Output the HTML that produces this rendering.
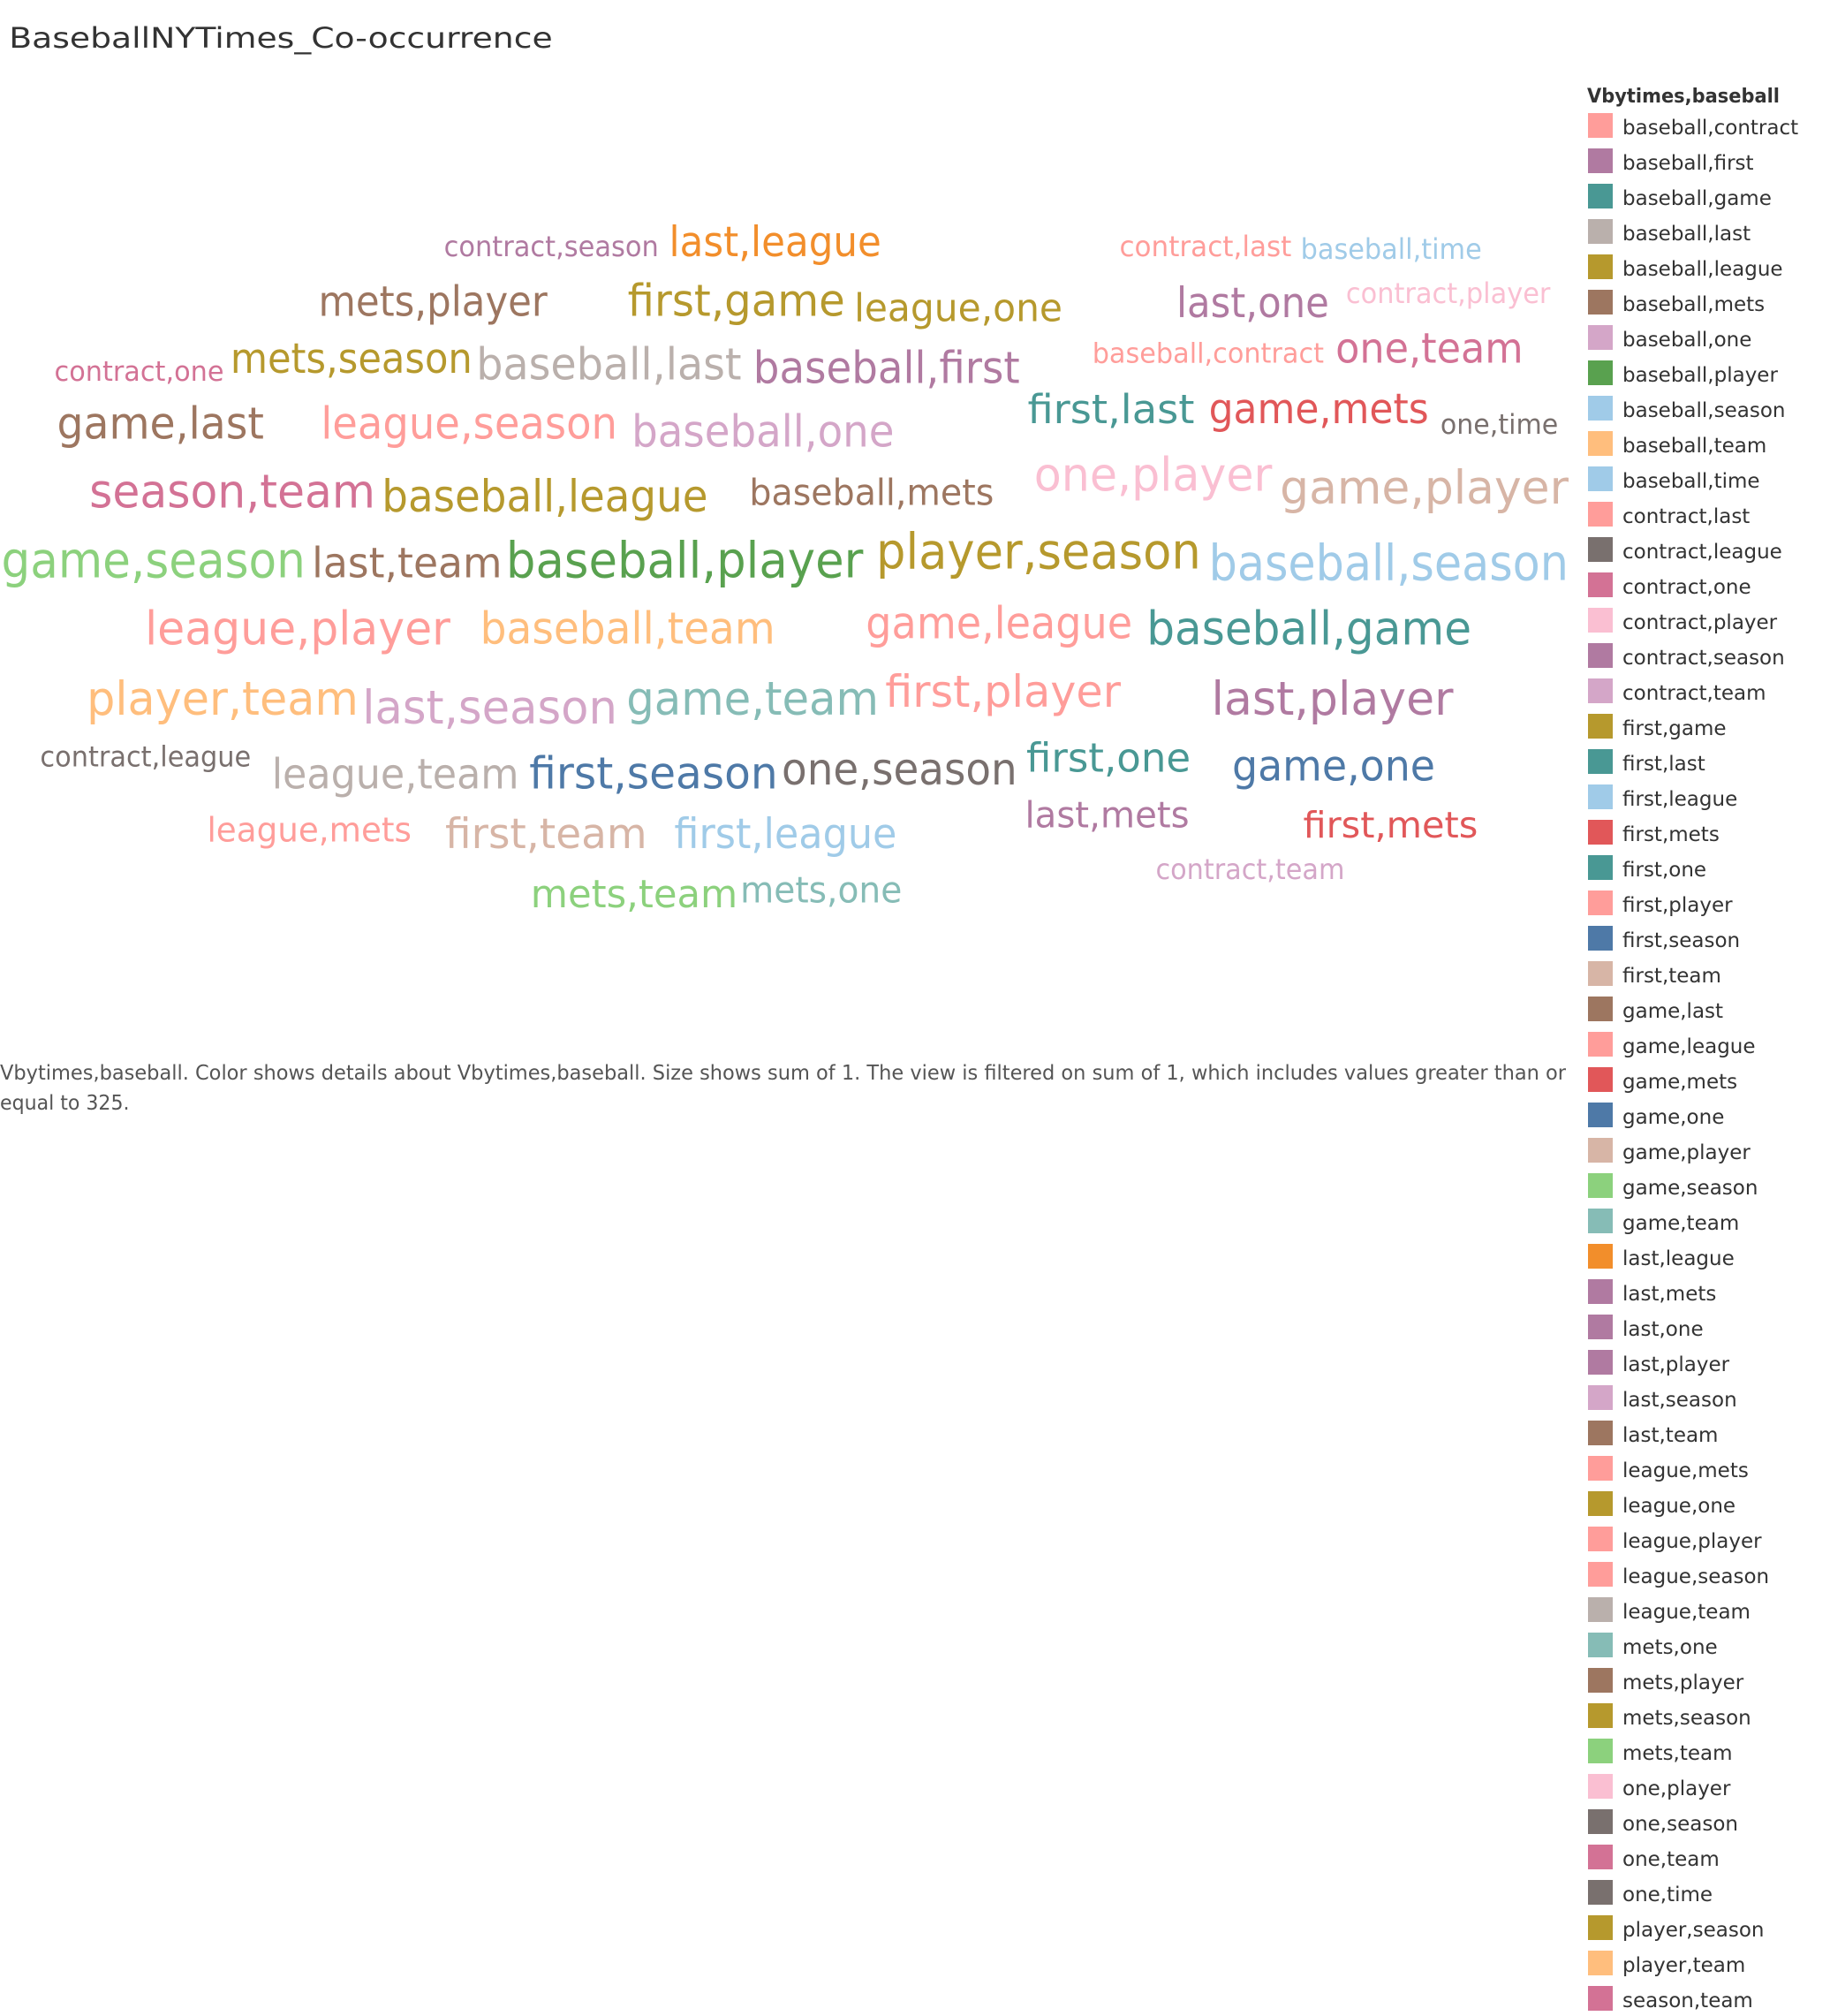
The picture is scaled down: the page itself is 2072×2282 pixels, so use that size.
<!DOCTYPE html>
<html><head><meta charset="utf-8"><style>
html,body{margin:0;padding:0;background:#fff;width:2072px;height:2282px;overflow:hidden}
svg{display:block}
text{font-family:"DejaVu Sans","Liberation Sans",sans-serif}
</style></head><body>
<svg width="2072" height="2282" viewBox="0 0 2072 2282" xmlns="http://www.w3.org/2000/svg">
<g transform="scale(1.4653)">
<text x="7" y="37" font-size="22" fill="#333" textLength="420" lengthAdjust="spacingAndGlyphs">BaseballNYTimes_Co-occurrence</text>
<g transform="translate(-1,-1)">
<text x="344" y="199" font-size="22" fill="#b07aa1" textLength="166" lengthAdjust="spacingAndGlyphs">contract,season</text>
<text x="518" y="199" font-size="32" fill="#f28e2b" textLength="164" lengthAdjust="spacingAndGlyphs">last,league</text>
<text x="866" y="199" font-size="22" fill="#ff9d9a" textLength="133" lengthAdjust="spacingAndGlyphs">contract,last</text>
<text x="1006" y="201" font-size="22" fill="#a0cbe8" textLength="140" lengthAdjust="spacingAndGlyphs">baseball,time</text>
<text x="247" y="245" font-size="32" fill="#9d7660" textLength="177" lengthAdjust="spacingAndGlyphs">mets,player</text>
<text x="486" y="245" font-size="34" fill="#b6992d" textLength="168" lengthAdjust="spacingAndGlyphs">first,game</text>
<text x="661" y="249" font-size="30" fill="#b6992d" textLength="161" lengthAdjust="spacingAndGlyphs">league,one</text>
<text x="910" y="246" font-size="32" fill="#b07aa1" textLength="118" lengthAdjust="spacingAndGlyphs">last,one</text>
<text x="1041" y="235" font-size="22" fill="#fabfd2" textLength="158" lengthAdjust="spacingAndGlyphs">contract,player</text>
<text x="43" y="295" font-size="21" fill="#d37295" textLength="131" lengthAdjust="spacingAndGlyphs">contract,one</text>
<text x="179" y="289" font-size="32" fill="#b6992d" textLength="187" lengthAdjust="spacingAndGlyphs">mets,season</text>
<text x="369" y="294" font-size="34" fill="#bab0ac" textLength="205" lengthAdjust="spacingAndGlyphs">baseball,last</text>
<text x="583" y="297" font-size="34" fill="#b07aa1" textLength="206" lengthAdjust="spacingAndGlyphs">baseball,first</text>
<text x="845" y="281" font-size="21" fill="#ff9d9a" textLength="179" lengthAdjust="spacingAndGlyphs">baseball,contract</text>
<text x="1033" y="281" font-size="32" fill="#d37295" textLength="145" lengthAdjust="spacingAndGlyphs">one,team</text>
<text x="45" y="340" font-size="34" fill="#9d7660" textLength="160" lengthAdjust="spacingAndGlyphs">game,last</text>
<text x="249" y="340" font-size="34" fill="#ff9d9a" textLength="229" lengthAdjust="spacingAndGlyphs">league,season</text>
<text x="489" y="346" font-size="34" fill="#d4a6c8" textLength="203" lengthAdjust="spacingAndGlyphs">baseball,one</text>
<text x="795" y="328" font-size="31" fill="#499894" textLength="129" lengthAdjust="spacingAndGlyphs">first,last</text>
<text x="935" y="328" font-size="32" fill="#e15759" textLength="170" lengthAdjust="spacingAndGlyphs">game,mets</text>
<text x="1114" y="336" font-size="21" fill="#79706e" textLength="91" lengthAdjust="spacingAndGlyphs">one,time</text>
<text x="70" y="393" font-size="36" fill="#d37295" textLength="221" lengthAdjust="spacingAndGlyphs">season,team</text>
<text x="296" y="396" font-size="34" fill="#b6992d" textLength="252" lengthAdjust="spacingAndGlyphs">baseball,league</text>
<text x="580" y="391" font-size="28" fill="#9d7660" textLength="189" lengthAdjust="spacingAndGlyphs">baseball,mets</text>
<text x="800" y="380" font-size="36" fill="#fabfd2" textLength="184" lengthAdjust="spacingAndGlyphs">one,player</text>
<text x="990" y="390" font-size="36" fill="#d7b5a6" textLength="223" lengthAdjust="spacingAndGlyphs">game,player</text>
<text x="2" y="447" font-size="38" fill="#8cd17d" textLength="235" lengthAdjust="spacingAndGlyphs">game,season</text>
<text x="242" y="447" font-size="32" fill="#9d7660" textLength="147" lengthAdjust="spacingAndGlyphs">last,team</text>
<text x="392" y="447" font-size="38" fill="#59a14f" textLength="276" lengthAdjust="spacingAndGlyphs">baseball,player</text>
<text x="678" y="440" font-size="38" fill="#b6992d" textLength="251" lengthAdjust="spacingAndGlyphs">player,season</text>
<text x="935" y="449" font-size="38" fill="#a0cbe8" textLength="278" lengthAdjust="spacingAndGlyphs">baseball,season</text>
<text x="113" y="499" font-size="36" fill="#ff9d9a" textLength="236" lengthAdjust="spacingAndGlyphs">league,player</text>
<text x="372" y="498" font-size="34" fill="#ffbe7d" textLength="228" lengthAdjust="spacingAndGlyphs">baseball,team</text>
<text x="670" y="494" font-size="34" fill="#ff9d9a" textLength="206" lengthAdjust="spacingAndGlyphs">game,league</text>
<text x="887" y="499" font-size="36" fill="#499894" textLength="251" lengthAdjust="spacingAndGlyphs">baseball,game</text>
<text x="68" y="553" font-size="36" fill="#ffbe7d" textLength="210" lengthAdjust="spacingAndGlyphs">player,team</text>
<text x="281" y="560" font-size="36" fill="#d4a6c8" textLength="197" lengthAdjust="spacingAndGlyphs">last,season</text>
<text x="485" y="553" font-size="36" fill="#86bcb6" textLength="195" lengthAdjust="spacingAndGlyphs">game,team</text>
<text x="685" y="547" font-size="34" fill="#ff9d9a" textLength="182" lengthAdjust="spacingAndGlyphs">first,player</text>
<text x="937" y="553" font-size="36" fill="#b07aa1" textLength="187" lengthAdjust="spacingAndGlyphs">last,player</text>
<text x="32" y="593" font-size="22" fill="#79706e" textLength="163" lengthAdjust="spacingAndGlyphs">contract,league</text>
<text x="211" y="610" font-size="32" fill="#bab0ac" textLength="191" lengthAdjust="spacingAndGlyphs">league,team</text>
<text x="410" y="610" font-size="34" fill="#4e79a7" textLength="192" lengthAdjust="spacingAndGlyphs">first,season</text>
<text x="605" y="607" font-size="34" fill="#79706e" textLength="182" lengthAdjust="spacingAndGlyphs">one,season</text>
<text x="794" y="597" font-size="31" fill="#499894" textLength="127" lengthAdjust="spacingAndGlyphs">first,one</text>
<text x="953" y="604" font-size="33" fill="#4e79a7" textLength="157" lengthAdjust="spacingAndGlyphs">game,one</text>
<text x="161" y="651" font-size="26" fill="#ff9d9a" textLength="158" lengthAdjust="spacingAndGlyphs">league,mets</text>
<text x="345" y="656" font-size="32" fill="#d7b5a6" textLength="156" lengthAdjust="spacingAndGlyphs">first,team</text>
<text x="522" y="656" font-size="32" fill="#a0cbe8" textLength="172" lengthAdjust="spacingAndGlyphs">first,league</text>
<text x="793" y="640" font-size="28" fill="#b07aa1" textLength="127" lengthAdjust="spacingAndGlyphs">last,mets</text>
<text x="1008" y="648" font-size="28" fill="#e15759" textLength="135" lengthAdjust="spacingAndGlyphs">first,mets</text>
<text x="894" y="680" font-size="22" fill="#d4a6c8" textLength="146" lengthAdjust="spacingAndGlyphs">contract,team</text>
<text x="411" y="702" font-size="30" fill="#8cd17d" textLength="160" lengthAdjust="spacingAndGlyphs">mets,team</text>
<text x="573" y="698" font-size="28" fill="#86bcb6" textLength="125" lengthAdjust="spacingAndGlyphs">mets,one</text>
</g>
<text x="0" y="834" font-size="15.5" fill="#555" textLength="1210" lengthAdjust="spacingAndGlyphs">Vbytimes,baseball.  Color shows details about Vbytimes,baseball.  Size shows sum of 1. The view is filtered on sum of 1, which includes values greater than or</text>
<text x="0" y="857" font-size="15.5" fill="#555" textLength="100" lengthAdjust="spacingAndGlyphs">equal to 325.</text>
</g>
<text x="1797" y="116" font-size="22" font-weight="bold" fill="#333" textLength="218" lengthAdjust="spacingAndGlyphs">Vbytimes,baseball</text>
<g font-size="23" fill="#333">
<rect x="1798" y="128" width="28" height="28" fill="#ff9d9a"/><text x="1837" y="152">baseball,contract</text>
<rect x="1798" y="168" width="28" height="28" fill="#b07aa1"/><text x="1837" y="192">baseball,first</text>
<rect x="1798" y="208" width="28" height="28" fill="#499894"/><text x="1837" y="232">baseball,game</text>
<rect x="1798" y="248" width="28" height="28" fill="#bab0ac"/><text x="1837" y="272">baseball,last</text>
<rect x="1798" y="288" width="28" height="28" fill="#b6992d"/><text x="1837" y="312">baseball,league</text>
<rect x="1798" y="328" width="28" height="28" fill="#9d7660"/><text x="1837" y="352">baseball,mets</text>
<rect x="1798" y="368" width="28" height="28" fill="#d4a6c8"/><text x="1837" y="392">baseball,one</text>
<rect x="1798" y="408" width="28" height="28" fill="#59a14f"/><text x="1837" y="432">baseball,player</text>
<rect x="1798" y="448" width="28" height="28" fill="#a0cbe8"/><text x="1837" y="472">baseball,season</text>
<rect x="1798" y="488" width="28" height="28" fill="#ffbe7d"/><text x="1837" y="512">baseball,team</text>
<rect x="1798" y="528" width="28" height="28" fill="#a0cbe8"/><text x="1837" y="552">baseball,time</text>
<rect x="1798" y="568" width="28" height="28" fill="#ff9d9a"/><text x="1837" y="592">contract,last</text>
<rect x="1798" y="608" width="28" height="28" fill="#79706e"/><text x="1837" y="632">contract,league</text>
<rect x="1798" y="648" width="28" height="28" fill="#d37295"/><text x="1837" y="672">contract,one</text>
<rect x="1798" y="688" width="28" height="28" fill="#fabfd2"/><text x="1837" y="712">contract,player</text>
<rect x="1798" y="728" width="28" height="28" fill="#b07aa1"/><text x="1837" y="752">contract,season</text>
<rect x="1798" y="768" width="28" height="28" fill="#d4a6c8"/><text x="1837" y="792">contract,team</text>
<rect x="1798" y="808" width="28" height="28" fill="#b6992d"/><text x="1837" y="832">first,game</text>
<rect x="1798" y="848" width="28" height="28" fill="#499894"/><text x="1837" y="872">first,last</text>
<rect x="1798" y="888" width="28" height="28" fill="#a0cbe8"/><text x="1837" y="912">first,league</text>
<rect x="1798" y="928" width="28" height="28" fill="#e15759"/><text x="1837" y="952">first,mets</text>
<rect x="1798" y="968" width="28" height="28" fill="#499894"/><text x="1837" y="992">first,one</text>
<rect x="1798" y="1008" width="28" height="28" fill="#ff9d9a"/><text x="1837" y="1032">first,player</text>
<rect x="1798" y="1048" width="28" height="28" fill="#4e79a7"/><text x="1837" y="1072">first,season</text>
<rect x="1798" y="1088" width="28" height="28" fill="#d7b5a6"/><text x="1837" y="1112">first,team</text>
<rect x="1798" y="1128" width="28" height="28" fill="#9d7660"/><text x="1837" y="1152">game,last</text>
<rect x="1798" y="1168" width="28" height="28" fill="#ff9d9a"/><text x="1837" y="1192">game,league</text>
<rect x="1798" y="1208" width="28" height="28" fill="#e15759"/><text x="1837" y="1232">game,mets</text>
<rect x="1798" y="1248" width="28" height="28" fill="#4e79a7"/><text x="1837" y="1272">game,one</text>
<rect x="1798" y="1288" width="28" height="28" fill="#d7b5a6"/><text x="1837" y="1312">game,player</text>
<rect x="1798" y="1328" width="28" height="28" fill="#8cd17d"/><text x="1837" y="1352">game,season</text>
<rect x="1798" y="1368" width="28" height="28" fill="#86bcb6"/><text x="1837" y="1392">game,team</text>
<rect x="1798" y="1408" width="28" height="28" fill="#f28e2b"/><text x="1837" y="1432">last,league</text>
<rect x="1798" y="1448" width="28" height="28" fill="#b07aa1"/><text x="1837" y="1472">last,mets</text>
<rect x="1798" y="1488" width="28" height="28" fill="#b07aa1"/><text x="1837" y="1512">last,one</text>
<rect x="1798" y="1528" width="28" height="28" fill="#b07aa1"/><text x="1837" y="1552">last,player</text>
<rect x="1798" y="1568" width="28" height="28" fill="#d4a6c8"/><text x="1837" y="1592">last,season</text>
<rect x="1798" y="1608" width="28" height="28" fill="#9d7660"/><text x="1837" y="1632">last,team</text>
<rect x="1798" y="1648" width="28" height="28" fill="#ff9d9a"/><text x="1837" y="1672">league,mets</text>
<rect x="1798" y="1688" width="28" height="28" fill="#b6992d"/><text x="1837" y="1712">league,one</text>
<rect x="1798" y="1728" width="28" height="28" fill="#ff9d9a"/><text x="1837" y="1752">league,player</text>
<rect x="1798" y="1768" width="28" height="28" fill="#ff9d9a"/><text x="1837" y="1792">league,season</text>
<rect x="1798" y="1808" width="28" height="28" fill="#bab0ac"/><text x="1837" y="1832">league,team</text>
<rect x="1798" y="1848" width="28" height="28" fill="#86bcb6"/><text x="1837" y="1872">mets,one</text>
<rect x="1798" y="1888" width="28" height="28" fill="#9d7660"/><text x="1837" y="1912">mets,player</text>
<rect x="1798" y="1928" width="28" height="28" fill="#b6992d"/><text x="1837" y="1952">mets,season</text>
<rect x="1798" y="1968" width="28" height="28" fill="#8cd17d"/><text x="1837" y="1992">mets,team</text>
<rect x="1798" y="2008" width="28" height="28" fill="#fabfd2"/><text x="1837" y="2032">one,player</text>
<rect x="1798" y="2048" width="28" height="28" fill="#79706e"/><text x="1837" y="2072">one,season</text>
<rect x="1798" y="2088" width="28" height="28" fill="#d37295"/><text x="1837" y="2112">one,team</text>
<rect x="1798" y="2128" width="28" height="28" fill="#79706e"/><text x="1837" y="2152">one,time</text>
<rect x="1798" y="2168" width="28" height="28" fill="#b6992d"/><text x="1837" y="2192">player,season</text>
<rect x="1798" y="2208" width="28" height="28" fill="#ffbe7d"/><text x="1837" y="2232">player,team</text>
<rect x="1798" y="2248" width="28" height="28" fill="#d37295"/><text x="1837" y="2272">season,team</text>
</g>
</svg>
</body></html>
